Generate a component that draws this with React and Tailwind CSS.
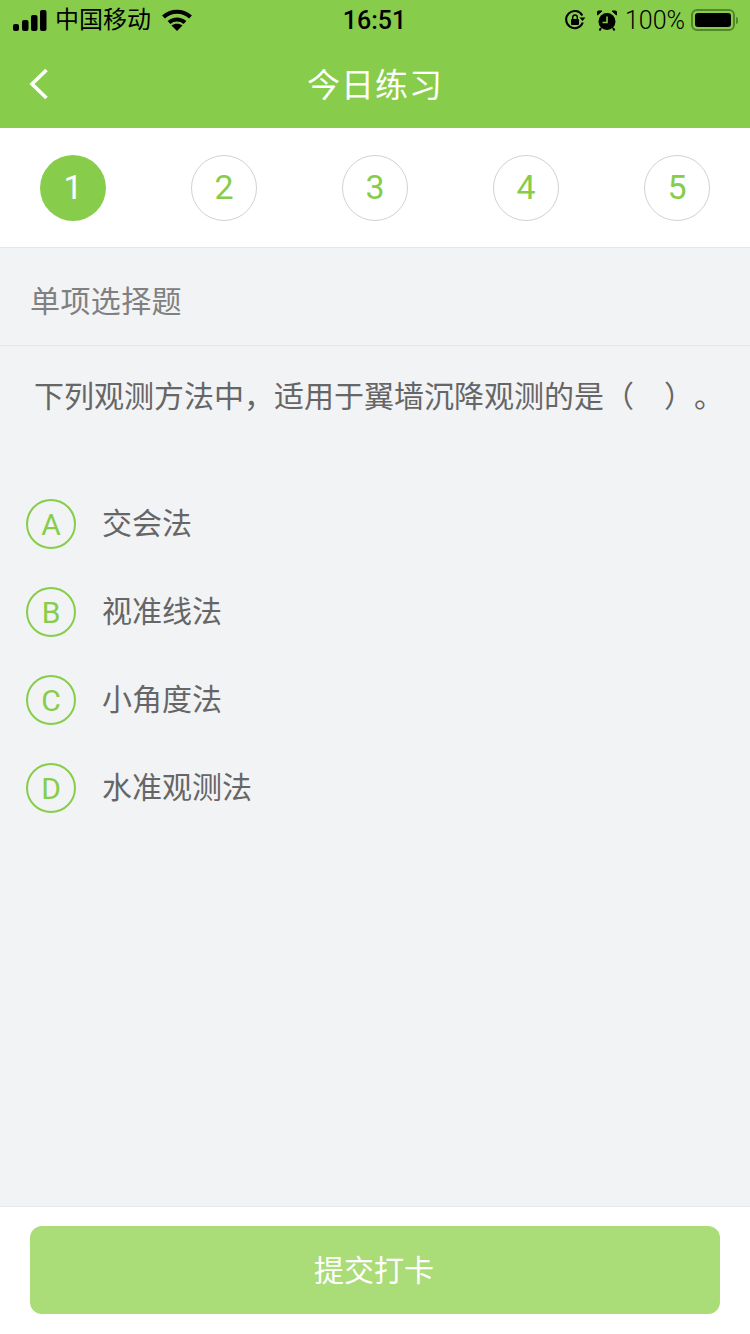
import React from 'react';

const STEPS = ['1', '2', '3', '4', '5'];
const OPTIONS = [
  { key: 'A', label: '交会法' },
  { key: 'B', label: '视准线法' },
  { key: 'C', label: '小角度法' },
  { key: 'D', label: '水准观测法' },
];

const FONT = "font-['Liberation_Sans','Noto_Sans_CJK_SC',sans-serif]";
const LATIN = "font-['Roboto',sans-serif] font-normal";

function SignalIcon() {
  return (
    <svg width="34" height="21" viewBox="0 0 34 21" fill="#000">
      <rect x="0" y="14" width="6" height="7" rx="2" />
      <rect x="9" y="10" width="6.500" height="11" rx="2" />
      <rect x="18" y="5" width="6.500" height="16" rx="2" />
      <rect x="27" y="0" width="6.500" height="21" rx="2" />
    </svg>
  );
}

function WifiIcon() {
  return (
    <svg width="30" height="22" viewBox="0 0 30 22" fill="none" stroke="#000" strokeWidth="4.200">
      <path d="M1.500 8C9 1 21 1 28.500 8" />
      <path d="M7 13.500c4.600-4 11.400-4 16 0" />
      <path d="M15 22l-5.500-5.500c3-2.500 8-2.500 11 0z" fill="#000" stroke="none" />
    </svg>
  );
}

function LockRotationIcon() {
  return (
    <svg width="22" height="22" viewBox="0 0 22 22" fill="none">
      <path d="M18.800 13.500A8.600 8.600 0 1 1 18.300 6.500" stroke="#000" strokeWidth="2" />
      <path d="M15.500 8.500h6l-3 3.500z" fill="#000" />
      <rect x="7" y="10" width="8" height="6" rx="1" fill="#000" />
      <path d="M8.700 10V8.300a2.300 2.300 0 0 1 4.600 0V10" stroke="#000" strokeWidth="1.400" />
    </svg>
  );
}

function AlarmIcon() {
  return (
    <svg width="20" height="21" viewBox="0 0 20 21" fill="none">
      <circle cx="10" cy="11.500" r="8.500" fill="#000" />
      <path d="M10 6.500V12.500H5.500" stroke="#87CD4B" strokeWidth="1.600" />
      <path d="M0.500 5L5 1H1.500A1 1 0 0 0 .5 2zM19.500 5L15 1h3.500a1 1 0 0 1 1 1z" fill="#000" stroke="#000" />
      <path d="M4 18L2.500 20.500M16 18l1.500 2.500" stroke="#000" strokeWidth="2" />
    </svg>
  );
}

function BatteryIcon() {
  return (
    <div className="flex items-center gap-[1px]">
      <div className="h-[22px] w-[44px] rounded-[6px] border-2 border-[#54862e] p-[2px]">
        <div className="h-full w-full rounded-[3px] bg-black" />
      </div>
      <div className="h-[7px] w-[2px] rounded-r-sm bg-[#54862e]" />
    </div>
  );
}

function StatusBar() {
  return (
    <div className="flex h-[40px] items-center justify-between pl-[13px] pr-[12px] text-black">
      <div className="flex w-[260px] items-center">
        <SignalIcon />
        <span className="ml-[8px] text-[24px] leading-none">中国移动</span>
        <span className="ml-[11px]"><WifiIcon /></span>
      </div>
      <span className="pr-[2px] font-['Roboto',sans-serif] text-[25px] font-medium leading-none">16:51</span>
      <div className="flex w-[260px] items-center justify-end">
        <LockRotationIcon />
        <span className="ml-[11px]"><AlarmIcon /></span>
        <span className="ml-[8px] mr-[6px] font-['Roboto',sans-serif] text-[25px] font-light leading-none">100%</span>
        <BatteryIcon />
      </div>
    </div>
  );
}

function NavBar() {
  return (
    <div className="relative flex h-[88px] items-center justify-center pt-[2px]">
      <svg className="absolute left-[29px] top-[28px]" width="20" height="32" viewBox="0 0 20 32" fill="none" stroke="#fff" strokeWidth="3.600">
        <path d="M17.500 2L3 16l14.500 14" />
      </svg>
      <h1 className="text-[33px] font-normal leading-none tracking-[1px] text-white">今日练习</h1>
    </div>
  );
}

function Steps() {
  return (
    <div className="flex h-[120px] items-center justify-between border-b border-[#e6e7e9] bg-white px-[40px]">
      {STEPS.map((step, i) => (
        <div
          key={step}
          className={`flex h-[66px] w-[66px] items-center justify-center rounded-full text-[34px] ${LATIN} ${
            i === 0 ? 'bg-[#87cd4b] text-white' : 'border border-[#cfd2d3] text-[#87cd4b]'
          }`}
        >
          {step}
        </div>
      ))}
    </div>
  );
}

export default function App() {
  return (
    <div className={`${FONT} flex h-[1334px] w-[750px] flex-col overflow-hidden bg-[#f2f3f5]`}>
      <header className="bg-[#87cd4b]">
        <StatusBar />
        <NavBar />
      </header>
      <Steps />

      <div className="flex h-[98px] shrink-0 items-center border-b border-[#e6e7e9] pl-[30px] pt-[10px] text-[30px] leading-none tracking-[0.4px] text-[#808080]">
        单项选择题
      </div>

      <main className="flex-1">
        <p className="pl-[34px] pt-[36px] text-[30px] leading-none text-[#666] [text-spacing-trim:space-all]">
          下列观测方法中，适用于翼墙沉降观测的是（<span className="inline-block w-[30px]" />）。
        </p>
        <ul className="mt-[87px] flex flex-col gap-[38px] pl-[26px]">
          {OPTIONS.map((opt) => (
            <li key={opt.key} className="flex items-center">
              <span className={`flex h-[50px] w-[50px] items-center justify-center rounded-full border-2 border-[#87cd4b] text-[30px] text-[#87cd4b] ${LATIN}`}>
                {opt.key}
              </span>
              <span className="ml-[26px] pb-[2px] text-[30px] text-[#666]">{opt.label}</span>
            </li>
          ))}
        </ul>
      </main>

      <footer className="flex h-[128px] shrink-0 justify-center border-t border-[#e6e7e9] bg-white pt-[19px]">
        <button
          type="button"
          className="flex h-[88px] w-[690px] items-center justify-center rounded-[12px] bg-[#aadc78] pr-[2px] text-[30px] text-white"
        >
          提交打卡
        </button>
      </footer>
    </div>
  );
}
